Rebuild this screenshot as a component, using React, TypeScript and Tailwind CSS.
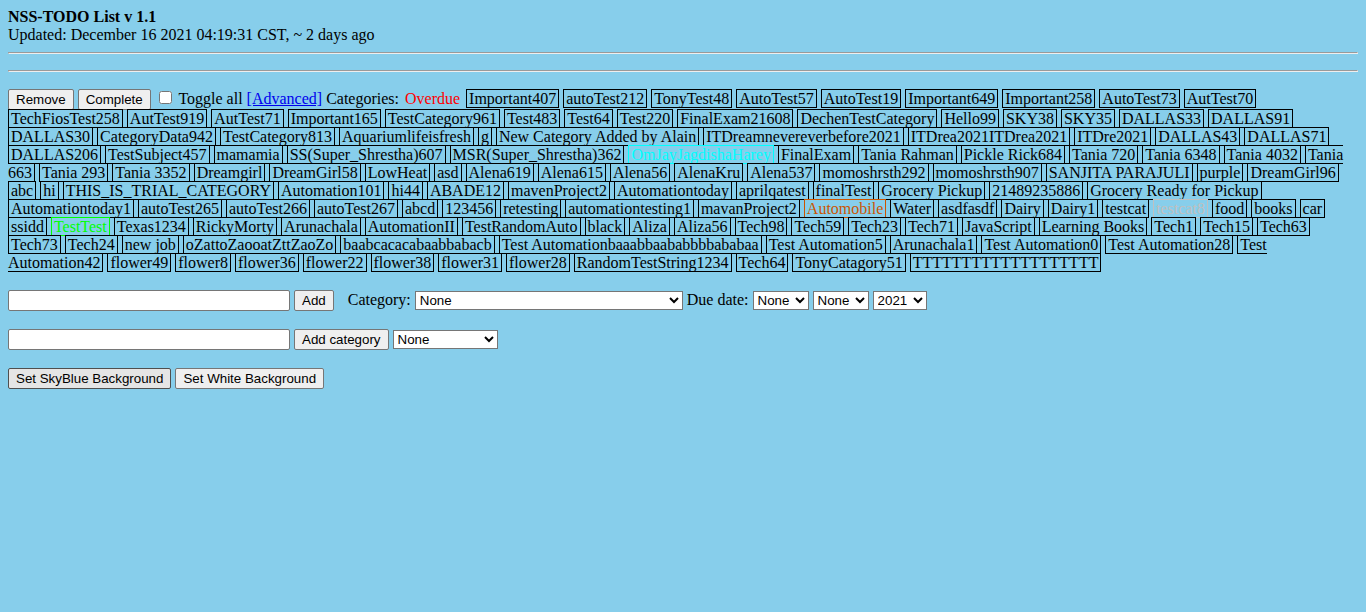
import { Fragment, useState } from "react";
import type { ButtonHTMLAttributes, SelectHTMLAttributes } from "react";

type Category = { name: string; color?: string };

const named = (list: string): Category[] =>
  list.split("|").map((name) => ({ name }));

const categories: Category[] = [
  ...named(
    "Important407|autoTest212|TonyTest48|AutoTest57|AutoTest19|Important649|Important258|AutoTest73|AutTest70",
  ),
  ...named(
    "TechFiosTest258|AutTest919|AutTest71|Important165|TestCategory961|Test483|Test64|Test220|FinalExam21608|DechenTestCategory|Hello99|SKY38|SKY35|DALLAS33|DALLAS91",
  ),
  ...named(
    "DALLAS30|CategoryData942|TestCategory813|Aquariumlifeisfresh|g|New Category Added by Alain|ITDreamnevereverbefore2021|ITDrea2021ITDrea2021|ITDre2021|DALLAS43|DALLAS71",
  ),
  ...named(
    "DALLAS206|TestSubject457|mamamia|SS(Super_Shrestha)607|MSR(Super_Shrestha)362",
  ),
  { name: "OmJayJagdishaHarey", color: "text-[#00ffff] border-[#00ffff]" },
  ...named(
    "FinalExam|Tania Rahman|Pickle Rick684|Tania 720|Tania 6348|Tania 4032|Tania 663|Tania 293|Tania 3352|Dreamgirl|DreamGirl58|LowHeat|asd|Alena619|Alena615|Alena56|AlenaKru|Alena537|momoshrsth292|momoshrsth907|SANJITA PARAJULI|purple|DreamGirl96",
  ),
  ...named(
    "abc|hi|THIS_IS_TRIAL_CATEGORY|Automation101|hi44|ABADE12|mavenProject2|Automationtoday|aprilqatest|finalTest|Grocery Pickup|21489235886|Grocery Ready for Pickup",
  ),
  ...named(
    "Automationtoday1|autoTest265|autoTest266|autoTest267|abcd|123456|retesting|automationtesting1|mavanProject2",
  ),
  { name: "Automobile", color: "text-[#cc5500] border-[#cc5500]" },
  ...named("Water|asdfasdf|Dairy|Dairy1|testcat"),
  { name: "testcat8", color: "text-[#c0c0c0] border-[#c0c0c0]" },
  ...named("food|books|car|ssidd"),
  { name: "TestTest", color: "text-[#00ff00] border-[#00ff00]" },
  ...named(
    "Texas1234|RickyMorty|Arunachala|AutomationII|TestRandomAuto|black|Aliza|Aliza56|Tech98|Tech59|Tech23|Tech71|JavaScript|Learning Books|Tech1|Tech15|Tech63",
  ),
  ...named(
    "Tech73|Tech24|new job|oZattoZaooatZttZaoZo|baabcacacabaabbabacb|Test Automationbaaabbaababbbbababaa|Test Automation5|Arunachala1|Test Automation0|Test Automation28|Test Automation42",
  ),
  ...named(
    "flower49|flower8|flower36|flower22|flower38|flower31|flower28|RandomTestString1234|Tech64|TonyCatagory51|TTTTTTTTTTTTTTTTTTT",
  ),
];

const controlFont =
  "font-['Liberation_Sans',Arial,sans-serif] [font-size:smaller] leading-[15px] text-black";

function Button({
  active = false,
  ...props
}: ButtonHTMLAttributes<HTMLButtonElement> & { active?: boolean }) {
  const tone = active
    ? "bg-[#e5e5e5] border-[#4f4f4f]"
    : "bg-[#efefef] border-[#767676]";
  return (
    <button
      type="button"
      className={`${controlFont} ${tone} h-[21px] rounded-[2px] border px-[7px] align-baseline`}
      {...props}
    />
  );
}

function Select({
  width,
  options,
  ...props
}: SelectHTMLAttributes<HTMLSelectElement> & {
  width: string;
  options: string[];
}) {
  return (
    <select
      className={`${controlFont} ${width} h-[19px] border border-[#767676] bg-white align-baseline`}
      {...props}
    >
      {options.map((option) => (
        <option key={option}>{option}</option>
      ))}
    </select>
  );
}

const textField = `${controlFont} h-[21px] w-[282px] border border-[#767676] rounded-[2px] bg-white px-[2px] align-baseline`;

const rule = "border border-[#9a9a9a] border-r-[#eeeeee] border-b-[#eeeeee]";

const days = ["None", ...Array.from({ length: 31 }, (_, i) => String(i + 1))];
const months = "None,Jan,Feb,Mar,Apr,May,Jun,Jul,Aug,Sep,Oct,Nov,Dec".split(",");
const colors = ["None", "Aqua", "Chocolate", "Lime", "Silver"];

export default function App() {
  const [sky, setSky] = useState(true);

  return (
    <main
      className={`${sky ? "bg-[#87ceeb]" : "bg-white"} min-h-screen p-2 font-['Liberation_Serif','Times_New_Roman',serif] text-base leading-[18px] text-black`}
    >
      <h1 className="font-bold">NSS-TODO List v 1.1</h1>
      <p>Updated: December 16 2021 04:19:31 CST, ~ 2 days ago</p>
      <hr className={`${rule} mt-2`} />
      <hr className={`${rule} mt-4`} />

      <div className="mt-4">
        <Button>Remove</Button> <Button>Complete</Button>{" "}
        <input
          id="toggle-all"
          type="checkbox"
          className="mt-[3px] mr-[3px] ml-1 size-[13px] align-baseline"
        />{" "}
        <label htmlFor="toggle-all">Toggle all</label>{" "}
        <a href="#advanced" className="text-[#0000ee] underline">
          [Advanced]
        </a>{" "}
        Categories:{" "}
        <a href="#overdue" className="px-[2px] text-[#ff0000]">
          Overdue
        </a>{" "}
        {categories.map(({ name, color }) => (
          <Fragment key={name}>
            <a
              href={`#${name}`}
              className={`${color ?? "border-black text-black"} border px-[2px]`}
            >
              {name}
            </a>{" "}
          </Fragment>
        ))}
      </div>

      <div className="mt-[18px]">
        <input type="text" aria-label="New item" className={textField} />{" "}
        <Button>Add</Button>{" "}
        <label htmlFor="category" className="ml-[10px]">
          Category:
        </label>{" "}
        <Select
          id="category"
          width="w-[268px]"
          options={["None", ...categories.map((c) => c.name)]}
        />{" "}
        <label htmlFor="due-day">Due date:</label>{" "}
        <Select id="due-day" width="w-14" options={days} />{" "}
        <Select aria-label="Due month" width="w-14" options={months} />{" "}
        <Select
          aria-label="Due year"
          width="w-[54px]"
          options={["2021", "2022", "2023"]}
        />
      </div>

      <div className="mt-[18px]">
        <input type="text" aria-label="New category" className={textField} />{" "}
        <Button>Add category</Button>{" "}
        <Select
          aria-label="Category color"
          width="w-[105px]"
          options={colors}
        />
      </div>

      <div className="mt-[18px]">
        <Button active={sky} onClick={() => setSky(true)}>
          Set SkyBlue Background
        </Button>{" "}
        <Button active={!sky} onClick={() => setSky(false)}>
          Set White Background
        </Button>
      </div>
    </main>
  );
}
